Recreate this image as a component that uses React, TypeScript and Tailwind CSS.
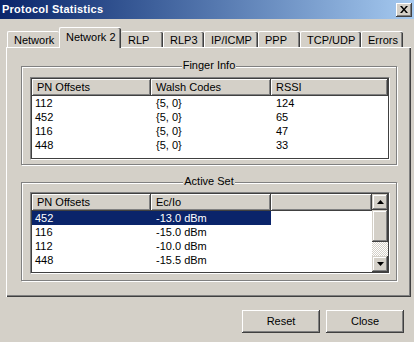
import React from "react";

const tabs = [
  { label: "Network", w: 52 },
  { label: "Network 2", w: 62, active: true },
  { label: "RLP", w: 42 },
  { label: "RLP3", w: 41 },
  { label: "IP/ICMP", w: 54 },
  { label: "PPP", w: 42 },
  { label: "TCP/UDP", w: 61 },
  { label: "Errors", w: 42 },
];

const finger = [
  ["112", "{5, 0}", "124"],
  ["452", "{5, 0}", "65"],
  ["116", "{5, 0}", "47"],
  ["448", "{5, 0}", "33"],
];

const active = [
  ["452", "-13.0 dBm"],
  ["116", "-15.0 dBm"],
  ["112", "-10.0 dBm"],
  ["448", "-15.5 dBm"],
];

function HeaderCell({ w, children, grow }: { w?: number; children?: React.ReactNode; grow?: boolean }) {
  return (
    <div
      className={`h-[17px] flex items-center pl-[5px] bg-[#d4d0c8] shadow-[inset_-1px_-1px_0_#404040,inset_1px_1px_0_#ffffff,inset_-2px_-2px_0_#808080] ${grow ? "flex-1" : ""}`}
      style={w ? { width: w } : undefined}
    >
      {children}
    </div>
  );
}

function GroupBox({ title, children }: { title: string; children: React.ReactNode }) {
  return (
    <div className="relative w-[376px] h-[99px] border border-[#808080] shadow-[inset_1px_1px_0_#ffffff,1px_1px_0_#ffffff]">
      <div className="absolute left-0 right-0 top-[-8px] flex justify-center">
        <span className="bg-[#d4d0c8] px-[1px] leading-[13px]">{title}</span>
      </div>
      {children}
    </div>
  );
}

function Arrow({ up }: { up?: boolean }) {
  return (
    <svg width="7" height="4" viewBox="0 0 7 4">
      {up ? <polygon points="3.5,0 7,4 0,4" fill="#000" /> : <polygon points="0,0 7,0 3.5,4" fill="#000" />}
    </svg>
  );
}

function ScrollBtn({ up }: { up?: boolean }) {
  return (
    <div className="w-[16px] h-[16px] flex items-center justify-center bg-[#d4d0c8] shadow-[inset_-1px_-1px_0_#404040,inset_1px_1px_0_#d4d0c8,inset_-2px_-2px_0_#808080,inset_2px_2px_0_#ffffff]">
      <Arrow up={up} />
    </div>
  );
}

export default function App() {
  return (
    <div className="w-[414px] h-[342px] bg-[#d4d0c8] flex flex-col overflow-hidden text-[11px] leading-[13px] text-black font-['Liberation_Sans',Arial,sans-serif]">
      {/* Title bar */}
      <div className="h-[19px] shrink-0 flex items-center justify-between pl-[2px] pr-[2px] bg-gradient-to-r from-[#0a246a] to-[#a6caf0]">
        <span className="font-bold text-white text-[11px] tracking-[0.25px]">Protocol Statistics</span>
        <div className="w-[16px] h-[14px] flex items-center justify-center bg-[#d4d0c8] shadow-[inset_-1px_-1px_0_#404040,inset_1px_1px_0_#ffffff,inset_-2px_-2px_0_#808080]">
          <svg width="8" height="7" viewBox="0 0 8 7">
            <path d="M0,0 L2,0 L4,2.5 L6,0 L8,0 L5,3.5 L8,7 L6,7 L4,4.5 L2,7 L0,7 L3,3.5 Z" fill="#000" />
          </svg>
        </div>
      </div>

      {/* Tabs */}
      <div className="h-[28px] shrink-0 flex items-end pl-[7px]">
        {tabs.map((t, i) => {
          const prevActive = tabs[i - 1]?.active;
          const nextActive = tabs[i + 1]?.active;
          if (t.active) {
            return (
              <div
                key={t.label}
                className="relative z-10 h-[21px] -mb-[1px] bg-[#d4d0c8] border-l border-t border-white rounded-tl-[2px] rounded-tr-[2px] shadow-[inset_-1px_0_0_#404040,inset_-2px_0_0_#808080] pl-[6px] pt-[3px]"
                style={{ width: t.w }}
              >
                {t.label}
              </div>
            );
          }
          return (
            <div
              key={t.label}
              className={`h-[16px] bg-[#d4d0c8] border-t border-white rounded-tl-[2px] rounded-tr-[2px] pt-[2px] ${prevActive ? "pl-[7px]" : "border-l pl-[6px]"} ${nextActive ? "" : "shadow-[inset_-1px_0_0_#404040,inset_-2px_0_0_#808080]"}`}
              style={{ width: t.w }}
            >
              {t.label}
            </div>
          );
        })}
      </div>

      {/* Tab panel */}
      <div className="ml-[6px] mr-[3px] h-[250px] shrink-0 border-l border-t border-white shadow-[inset_-1px_-1px_0_#404040,inset_-2px_-2px_0_#808080] pl-[14px] pt-[18px] flex flex-col gap-[17px]">
        <GroupBox title="Finger Info">
          <div className="ml-[8px] mt-[10px] w-[360px] h-[83px] bg-white border border-t-[#808080] border-l-[#808080] border-r-[#ffffff] border-b-[#ffffff]">
            <div className="w-full h-full border border-[#404040] flex flex-col">
              <div className="flex">
                <HeaderCell w={119}>PN Offsets</HeaderCell>
                <HeaderCell w={120}>Walsh Codes</HeaderCell>
                <HeaderCell grow>RSSI</HeaderCell>
              </div>
              {finger.map((r) => (
                <div key={r[0]} className="flex h-[14px] items-center">
                  <div className="w-[119px] pl-[3px]">{r[0]}</div>
                  <div className="w-[120px] pl-[5px]">{r[1]}</div>
                  <div className="flex-1 pl-[5px]">{r[2]}</div>
                </div>
              ))}
            </div>
          </div>
        </GroupBox>
        <GroupBox title="Active Set">
          <div className="ml-[8px] mt-[9px] w-[360px] h-[82px] bg-white border border-t-[#808080] border-l-[#808080] border-r-[#ffffff] border-b-[#ffffff]">
            <div className="w-full h-full border border-[#404040] flex">
              <div className="flex-1 flex flex-col">
                <div className="flex">
                  <HeaderCell w={119}>PN Offsets</HeaderCell>
                  <HeaderCell w={120}>Ec/Io</HeaderCell>
                  <HeaderCell grow />
                </div>
                {active.map((r, i) => (
                  <div key={r[0]} className="flex h-[14px] items-center">
                    <div className={`w-[239px] flex h-full items-center ${i === 0 ? "bg-[#0a246a] text-white" : ""}`}>
                      <div className="w-[119px] pl-[3px]">{r[0]}</div>
                      <div className="w-[120px] pl-[5px]">{r[1]}</div>
                    </div>
                  </div>
                ))}
              </div>
              <div className="w-[16px] flex flex-col">
                <ScrollBtn up />
                <div className="h-[32px] bg-[#d4d0c8] shadow-[inset_-1px_-1px_0_#404040,inset_1px_1px_0_#d4d0c8,inset_-2px_-2px_0_#808080,inset_2px_2px_0_#ffffff]" />
                <div className="flex-1 bg-[repeating-conic-gradient(#d4d0c8_0%_25%,#ffffff_0%_50%)] bg-[length:2px_2px]" />
                <ScrollBtn />
              </div>
            </div>
          </div>
        </GroupBox>
      </div>

      {/* Buttons */}
      <div className="flex justify-end gap-[6px] pr-[10px] pt-[13px]">
        {["Reset", "Close"].map((b) => (
          <div
            key={b}
            className="w-[78px] h-[23px] flex items-center justify-center bg-[#d4d0c8] shadow-[inset_-1px_-1px_0_#404040,inset_1px_1px_0_#ffffff,inset_-2px_-2px_0_#808080]"
          >
            {b}
          </div>
        ))}
      </div>
    </div>
  );
}
